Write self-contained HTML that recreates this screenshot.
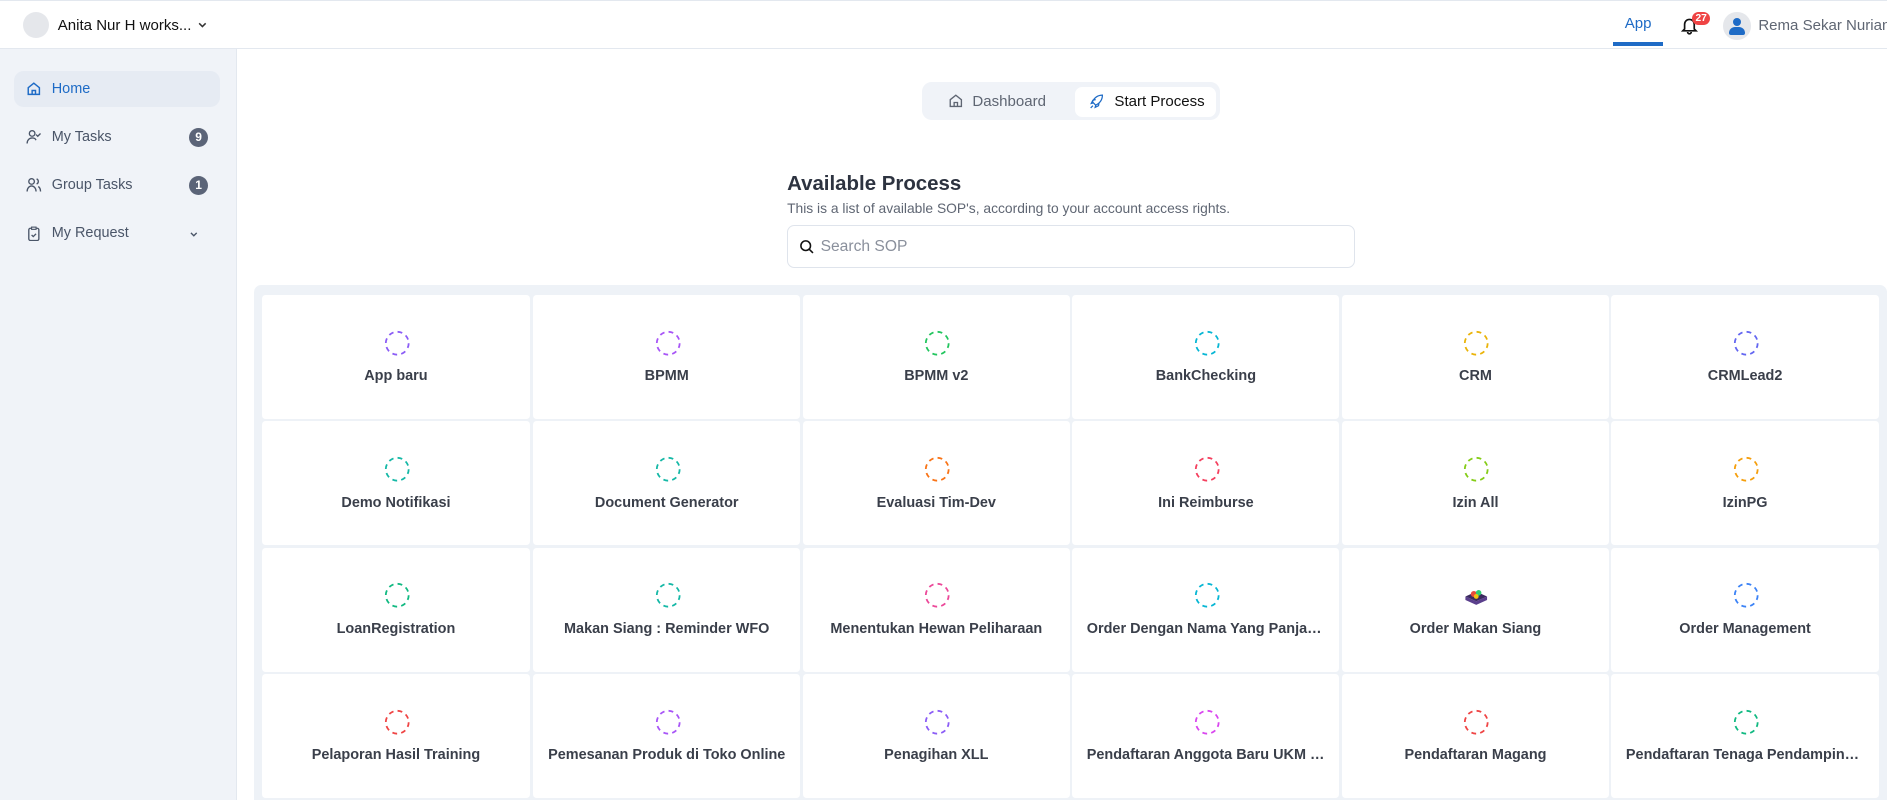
<!DOCTYPE html>
<html><head><meta charset="utf-8"><style>
*{box-sizing:border-box;margin:0;padding:0}
html,body{width:1887px;height:801px;overflow:hidden;background:#fff;font-family:"Liberation Sans",Arial,sans-serif}
#w{zoom:1.2035;width:1568px;height:665px;position:relative;overflow:hidden}
.hdr{position:absolute;left:0;top:0;width:1568px;height:41px;border-bottom:1px solid #e3e8ef;border-top:1px solid #e3e8ef;background:#fff}
.side{position:absolute;left:0;top:41px;width:197px;height:624px;background:#f0f3f8;border-right:1px solid #e3e8ef}
.it{position:absolute;left:12px;width:171px;height:30px;border-radius:8px;font-size:12px;color:#4a5568;display:flex;align-items:center;padding-left:10px}
.it svg{margin-right:8px}
.bd{position:absolute;right:10px;top:7px;width:16px;height:16px;border-radius:8px;background:#5b6478;color:#fff;font-size:10px;font-weight:bold;text-align:center;line-height:16px}
.grid{position:absolute;left:211px;top:237px;width:1357px;height:428px;background:#eef2f7;border-radius:6px 6px 0 0;overflow:hidden}
.c{position:absolute;width:222px;height:103px;background:#fff;border-radius:3px;text-align:center}
.c svg{position:absolute;left:101px;top:29px}
.c span{position:absolute;left:0;right:0;top:61px;font-size:12px;font-weight:bold;color:#3a3f4a;white-space:nowrap;overflow:hidden;text-overflow:ellipsis;padding:0 12px}
</style></head><body><div id="w">
<div class="hdr">
 <div style="position:absolute;left:19px;top:9px;width:22px;height:22px;border-radius:50%;background:#e5e7eb"></div>
 <div style="position:absolute;left:48px;top:13px;font-size:12.5px;color:#111">Anita Nur H works...</div>
 <svg style="position:absolute;left:164px;top:15px" width="9" height="9" viewBox="0 0 10 10"><path d="M2 4l3 3 3-3" stroke="#333" stroke-width="1.4" fill="none"/></svg>
 <div style="position:absolute;left:1350px;top:12px;font-size:12.5px;color:#1e6bc6">App</div>
 <div style="position:absolute;left:1340px;top:34px;width:42px;height:3px;background:#1e6bc6"></div>
 <svg style="position:absolute;left:1397px;top:13px" width="14" height="15" viewBox="0 0 14 15"><path d="M3 10V6a4 4 0 018 0v4l1.5 1.5h-11z M5.5 12.5a1.5 1.5 0 003 0" stroke="#111" stroke-width="1.4" fill="none"/></svg>
 <div style="position:absolute;left:1406px;top:9px;width:15px;height:11px;border-radius:6px;background:#ef4444;color:#fff;font-size:8.5px;line-height:11px;text-align:center;font-weight:bold">27</div>
 <div style="position:absolute;left:1432px;top:9px;width:23px;height:23px;border-radius:50%;background:#e5e7eb;overflow:hidden"><div style="position:absolute;left:8px;top:5px;width:7px;height:7px;border-radius:50%;background:#1e6bc6"></div><div style="position:absolute;left:5px;top:13px;width:13px;height:6px;border-radius:6px 6px 2px 2px;background:#1e6bc6"></div></div>
 <div style="position:absolute;left:1461px;top:13px;font-size:12.5px;color:#5f6673;white-space:nowrap">Rema Sekar Nuriani</div>
</div>
<div class="side">
 <div class="it" style="top:18px;background:#e6ebf3;color:#1e6bc6"><svg width="13" height="13" viewBox="0 0 14 14"><path d="M2 6l5-4 5 4v6H2z M5.5 12V8.5h3V12" stroke="#1e6bc6" stroke-width="1.3" fill="none"/></svg>Home</div>
 <div class="it" style="top:58px"><svg width="13" height="13" viewBox="0 0 14 14"><circle cx="5.5" cy="4" r="2.5" stroke="#4a5568" stroke-width="1.2" fill="none"/><path d="M1 13c0-3 2-5 4.5-5s3 1 3.5 2 M9 5l1.5 1.5L13 4" stroke="#4a5568" stroke-width="1.2" fill="none"/></svg>My Tasks<div class="bd">9</div></div>
 <div class="it" style="top:98px"><svg width="13" height="13" viewBox="0 0 14 14"><circle cx="5" cy="4" r="2.5" stroke="#4a5568" stroke-width="1.2" fill="none"/><path d="M1 13c0-3 2-5 4-5s4 2 4 5 M9.5 1.7a2.5 2.5 0 010 4.6 M11 8.5c1.3.8 2 2.5 2 4.5" stroke="#4a5568" stroke-width="1.2" fill="none"/></svg>Group Tasks<div class="bd">1</div></div>
 <div class="it" style="top:138px"><svg width="13" height="13" viewBox="0 0 14 14"><rect x="2.5" y="2" width="9" height="11" rx="1.5" stroke="#4a5568" stroke-width="1.2" fill="none"/><rect x="5" y="1" width="4" height="2" stroke="#4a5568" stroke-width="1" fill="#f0f3f8"/><path d="M5 8l1.5 1.5L9 7" stroke="#4a5568" stroke-width="1.2" fill="none"/></svg>My Request<svg style="position:absolute;right:10px;top:11px" width="8" height="8" viewBox="0 0 10 10"><path d="M2 4l3 3 3-3" stroke="#4a5568" stroke-width="1.4" fill="none"/></svg></div>
</div>
<div style="position:absolute;left:766px;top:68px;width:248px;height:32px;background:#f0f3f8;border-radius:8px">
 <div style="position:absolute;left:22px;top:9px;font-size:12.5px;color:#5f6673;display:flex;align-items:center"><svg width="13" height="13" viewBox="0 0 14 14" style="margin-right:7px"><path d="M2 6l5-4 5 4v6H2z M5.5 12V8.5h3V12" stroke="#5f6673" stroke-width="1.2" fill="none"/></svg>Dashboard</div>
 <div style="position:absolute;left:127px;top:4px;width:117px;height:25px;background:#fff;border-radius:6px;font-size:12.5px;color:#111;display:flex;align-items:center;padding-left:12px"><svg width="13" height="13" viewBox="0 0 14 14" style="margin-right:8px"><path d="M5 9l-2-2c2-4 5-6 9-6 0 4-2 7-6 9z M4 8l-2 .5 1.5-3 2.5-.5 M6 10l-.5 2 3-1.5.5-2.5 M3.5 10.5L1.5 12.5" stroke="#1e6bc6" stroke-width="1.1" fill="none"/></svg>Start Process</div>
</div>
<div style="position:absolute;left:654px;top:143px;font-size:17px;font-weight:bold;color:#2d3340">Available Process</div>
<div style="position:absolute;left:654px;top:166px;font-size:11.5px;color:#5f6673">This is a list of available SOP's, according to your account access rights.</div>
<div style="position:absolute;left:654px;top:187px;width:472px;height:36px;border:1px solid #dfe4ec;border-radius:6px">
 <svg style="position:absolute;left:9px;top:11px" width="13" height="13" viewBox="0 0 14 14"><circle cx="6" cy="6" r="4.3" stroke="#111" stroke-width="1.4" fill="none"/><path d="M9.2 9.2L12.5 12.5" stroke="#111" stroke-width="1.4"/></svg>
 <div style="position:absolute;left:27px;top:10px;font-size:13px;color:#8a909c">Search SOP</div>
</div>
<div class="grid" id="g"></div>
</div>
<script>
var items=[["App baru","#8b5cf6"],["BPMM","#a855f7"],["BPMM v2","#22c55e"],["BankChecking","#06b6d4"],["CRM","#eab308"],["CRMLead2","#6366f1"],
["Demo Notifikasi","#14b8a6"],["Document Generator","#14b8a6"],["Evaluasi Tim-Dev","#f97316"],["Ini Reimburse","#f43f5e"],["Izin All","#84cc16"],["IzinPG","#f59e0b"],
["LoanRegistration","#10b981"],["Makan Siang : Reminder WFO","#14b8a6"],["Menentukan Hewan Peliharaan","#ec4899"],["Order Dengan Nama Yang Panjang Sekali","#06b6d4"],["Order Makan Siang",null],["Order Management","#3b82f6"],
["Pelaporan Hasil Training","#ef4444"],["Pemesanan Produk di Toko Online","#a855f7"],["Penagihan XLL","#8b5cf6"],["Pendaftaran Anggota Baru UKM Kampus","#d946ef"],["Pendaftaran Magang","#ef4444"],["Pendaftaran Tenaga Pendamping Baru","#10b981"],
["","#ccc"],["","#ccc"],["","#ccc"],["","#ccc"],["","#ccc"],["","#ccc"]];
var xs=[7,232,456,680,904,1128],h='';
items.forEach(function(it,i){var r=Math.floor(i/6),c=i%6;
var ic=it[1]?'<svg width="22" height="22" viewBox="0 0 22 22"><circle cx="11" cy="11" r="9.5" stroke="'+it[1]+'" stroke-width="1.5" fill="none" stroke-dasharray="4 3.46"/></svg>':
'<svg width="22" height="22" viewBox="0 0 22 22"><path d="M2 12l9-4 9 4-9 4z" fill="#3b2a5e"/><path d="M2 12v3l9 4 9-4v-3l-9 4z" fill="#5a3f8c"/><circle cx="9" cy="10" r="2.5" fill="#e74c3c"/><circle cx="13" cy="9" r="2.3" fill="#2ecc71"/><circle cx="11" cy="12" r="2" fill="#f1c40f"/></svg>';
h+='<div class="c" style="left:'+xs[c]+'px;top:'+(8+r*105)+'px">'+ic+'<span>'+it[0]+'</span></div>';});
document.getElementById('g').innerHTML=h;
</script>
</body></html>
